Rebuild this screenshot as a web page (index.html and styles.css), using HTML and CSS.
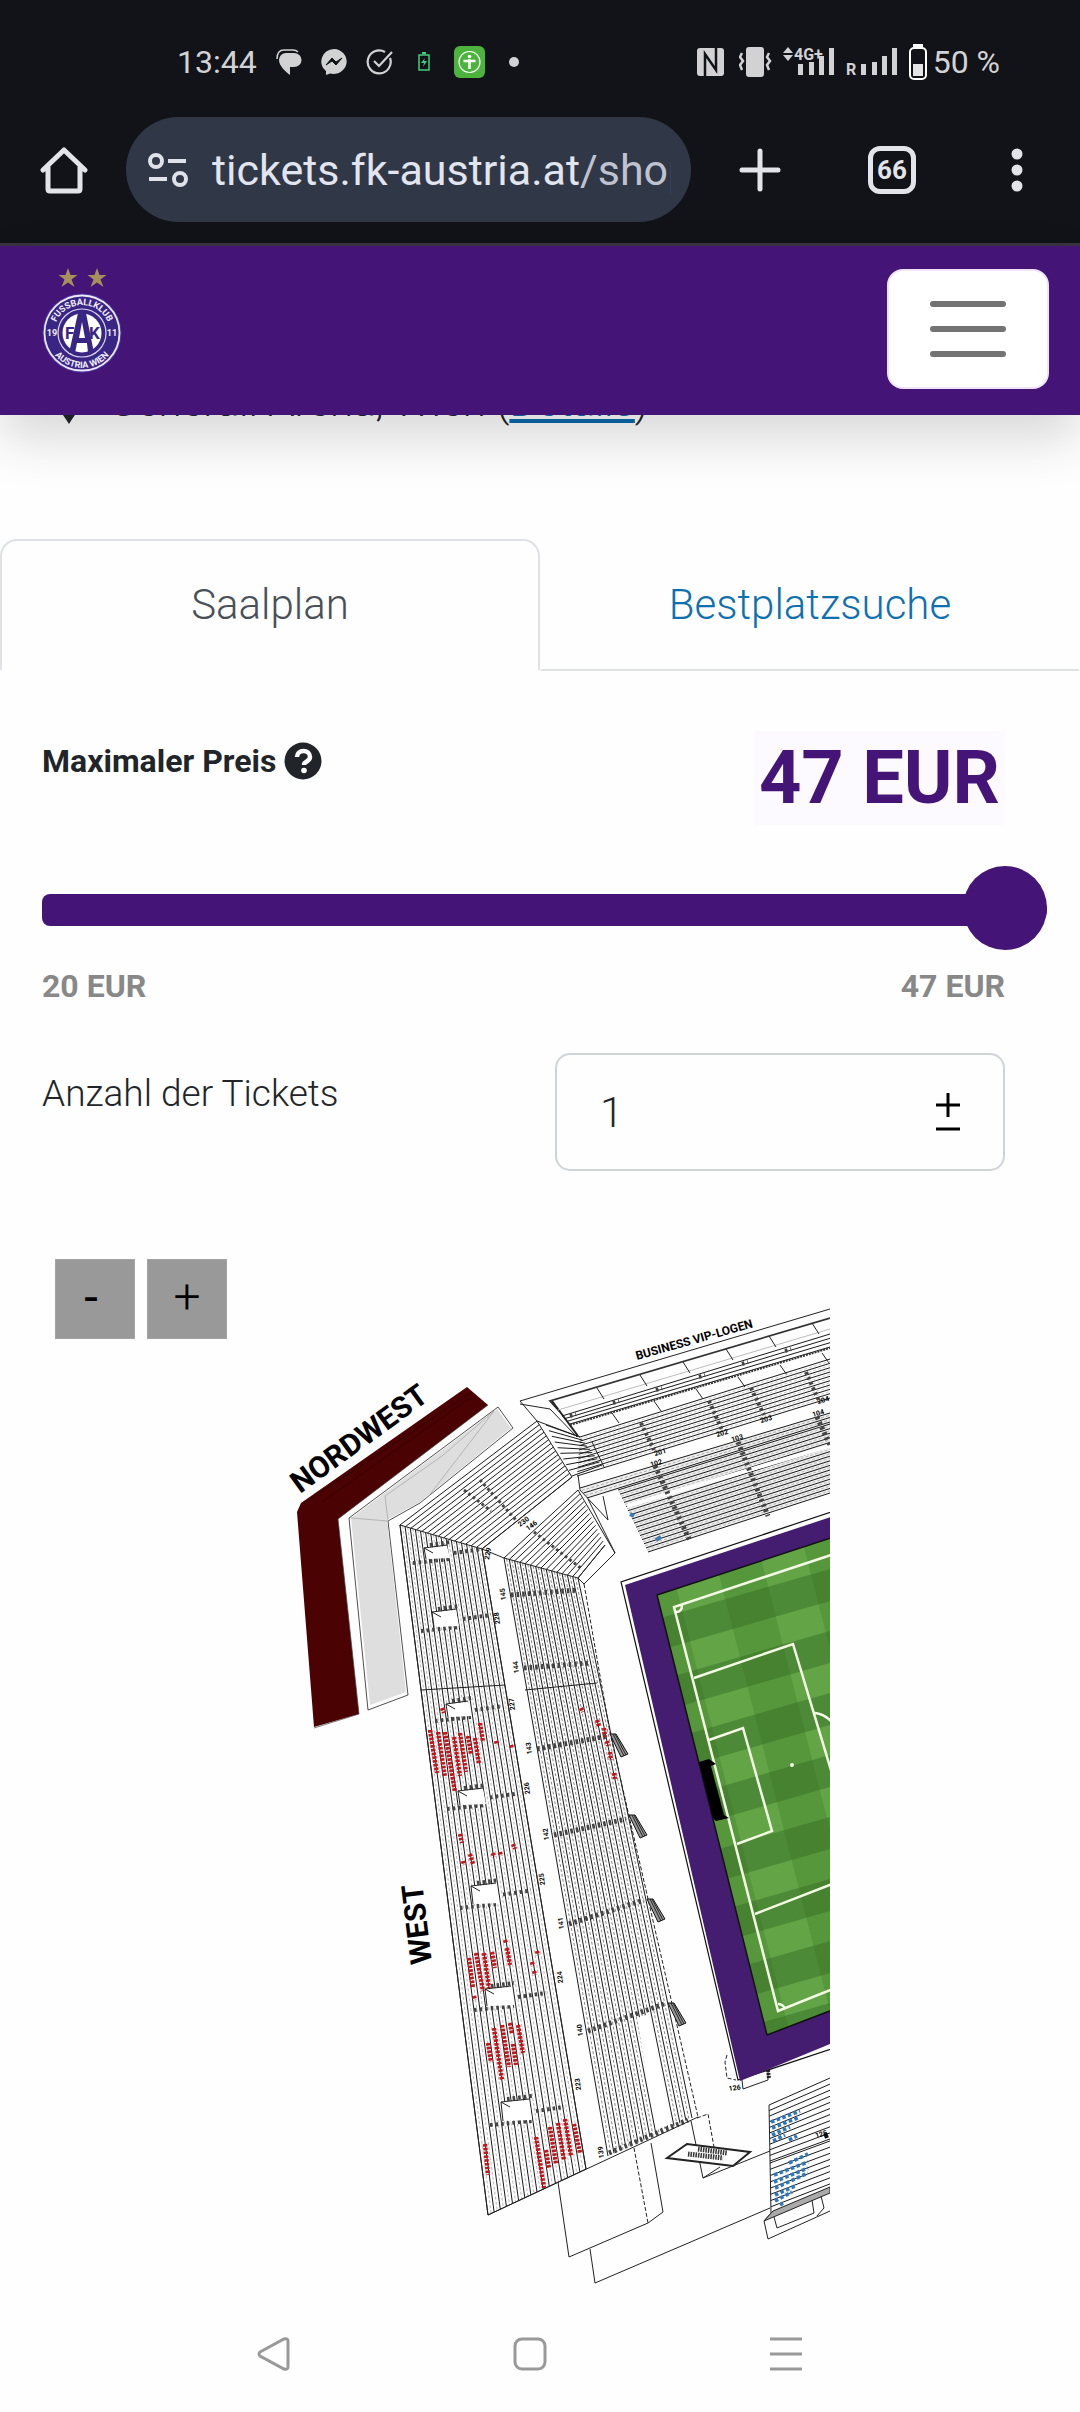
FILE: index.html
```html
<!DOCTYPE html>
<html lang="de">
<head>
    <meta charset="UTF-8">
    <meta name="viewport" content="width=device-width, initial-scale=1.0">
    <title>FK Austria Wien Tickets</title>
    <link rel="stylesheet" href="styles.css">
</head>
<body>
    <div class="phone-top">
        <div class="status">
            <div class="status-left">
                <span>13:44</span>
                <svg width="26" height="26" viewBox="0 0 26 26"><path d="M10 4h8a7 6.500 0 0 1 0 14h-4v8C10 23 3 17 3 11a7 7 0 0 1 7-7z" fill="#d2d2d4"/><path d="M1 10C1 4 4 1 8 1h9c3 0 4 1 5 2" fill="none" stroke="#d2d2d4" stroke-width="1.500"/></svg>
                <svg width="26" height="26" viewBox="0 0 26 26"><path d="M13 0a13 12.500 0 1 1-4 24.500l-4 1.500v-4A13 12.500 0 0 1 13 0z" fill="#d2d2d4"/><path d="M5 16l6-7 4 4 6-4-6 7-4-4z" fill="#121318" stroke="#121318" stroke-width="1"/></svg>
                <svg width="28" height="26" viewBox="0 0 28 26"><g fill="none" stroke="#d2d2d4" stroke-width="2.200"><path d="M19 3A11.500 11.500 0 1 0 24 9"/><path d="M8 12l5 5L26 3"/></g></svg>
                <svg class="mini-battery" width="12" height="20" viewBox="0 0 12 20"><path d="M4 0h4v2H4z" fill="#3fd07a"/><path d="M1 3h10v15H1z" fill="none" stroke="#3fd07a" stroke-width="1.500"/><path d="M7 6l-4 5h3l-1 4 4-6H6z" fill="#3fd07a"/></svg>
                <svg width="31" height="32" viewBox="0 0 31 32"><rect width="31" height="32" rx="6" fill="#4cb43c"/><circle cx="15.500" cy="16" r="10.500" fill="none" stroke="#fff" stroke-width="1.200"/><circle cx="15.500" cy="10.500" r="1.800" fill="#fff"/><path d="M9.500 15h12M15.500 13v10" stroke="#fff" stroke-width="2.600"/></svg>
                <svg class="more-dot" width="10" height="10" viewBox="0 0 10 10"><circle cx="5" cy="5" r="5" fill="#d2d2d4"/></svg>
            </div>
            <div class="status-right">
                <svg width="27" height="28" viewBox="0 0 27 28"><rect width="27" height="28" rx="3" fill="#d2d2d4"/><path d="M8 28V6l11 16V0" fill="none" stroke="#121318" stroke-width="2.500"/></svg>
                <svg class="vibrate" width="33" height="32" viewBox="0 0 33 32"><rect x="7" y="1" width="18" height="30" rx="3" fill="#d2d2d4"/><path d="M3 7l-2 4 3 4-3 4 2 5M30 7l-2 4 3 4-3 4 2 5" fill="none" stroke="#d2d2d4" stroke-width="2.500"/></svg>
                <svg class="signal" width="54" height="32" viewBox="0 0 54 32"><g fill="#d2d2d4"><path d="M0 7l5-6 5 6zM0 9l5 6 5-6z"/><rect x="15" y="18" width="5" height="11"/><rect x="26" y="16" width="5" height="13"/><rect x="36" y="10" width="5" height="19"/><rect x="46" y="2" width="5" height="27"/><text x="11" y="14" class="net">4G+</text></g></svg>
                <svg class="signal" width="54" height="32" viewBox="0 0 54 32"><g fill="#d2d2d4"><text x="0" y="29" class="net">R</text><rect x="15" y="18" width="5" height="11"/><rect x="26" y="16" width="5" height="13"/><rect x="36" y="10" width="5" height="19"/><rect x="46" y="2" width="5" height="27"/></g></svg>
                <svg class="battery" width="18" height="36" viewBox="0 0 18 36"><rect x="4" y="0" width="10" height="3" fill="#fff"/><rect x="1" y="4" width="16" height="31" rx="4" fill="none" stroke="#fff" stroke-width="2"/><rect x="4" y="20" width="10" height="12" fill="#e4e4e4"/></svg>
                <span>50 %</span>
            </div>
        </div>
        <div class="toolbar">
            <button class="tool" aria-label="Startseite"><svg width="48" height="48" viewBox="0 0 48 48"><path d="M3 24L24 4l21 20M8 21v22q0 2 2 2h28q2 0 2-2V21" fill="none" stroke="#e3e3ea" stroke-width="5" stroke-linejoin="round" stroke-linecap="round"/></svg></button>
            <div class="address">
                <svg width="40" height="34" viewBox="0 0 40 34"><g fill="none" stroke="#e0e2ea" stroke-width="4"><circle cx="8" cy="8" r="6"/><path d="M20 8h18M1 26h18"/><circle cx="32" cy="26" r="6"/></g></svg>
                <div class="url">tickets.fk-austria.at<span>/shop</span></div>
            </div>
            <button class="tool" aria-label="Neuer Tab"><svg width="42" height="44" viewBox="0 0 42 44"><path d="M21 3v38M3 22h36" stroke="#e3e3ea" stroke-width="5" stroke-linecap="round"/></svg></button>
            <button class="tool tabs-count">66</button>
            <button class="tool" aria-label="Menü"><svg width="12" height="44" viewBox="0 0 12 44"><g fill="#e3e3ea"><circle cx="6" cy="6" r="5.500"/><circle cx="6" cy="22" r="5.500"/><circle cx="6" cy="38" r="5.500"/></g></svg></button>
        </div>
    </div>

    <header class="header">
        <a href="#" class="logo" aria-label="FK Austria Wien">
            <svg width="82" height="110" viewBox="0 0 82 110">
                <g fill="#a98f5c"><path id="star" d="M27 0l2.500 7h7l-6 4.500 3 7.500-6.500-4.500-6.500 4.500 3-7.500-6-4.500h7z"/><use href="#star" x="29"/></g>
                <circle cx="41" cy="65" r="39.500" fill="#4a3aa5"/>
                <circle cx="41" cy="65" r="37.500" fill="#392584" stroke="#eee8fa" stroke-width="1.800"/>
                <circle cx="41" cy="65" r="24" fill="none" stroke="#ddd5f2" stroke-width="1.200"/>
                <circle cx="41" cy="65" r="19.500" fill="#fff"/>
                <path d="M37 45h8l8 40h-6l-1-10H36l-2 10h-6z" fill="#392584"/>
                <path d="M41 54l3 16h-6z" fill="#fff"/>
                <path id="arc-top" d="M13 65a28 28 0 0 1 56 0" fill="none"/>
                <path id="arc-bottom" d="M6 65a35 35 0 0 0 70 0" fill="none"/>
                <g class="crest-text" fill="#f3effc">
                    <text><textPath href="#arc-top" startOffset="50%">FUSSBALLKLUB</textPath></text>
                    <text><textPath href="#arc-bottom" startOffset="50%">AUSTRIA WIEN</textPath></text>
                    <text x="11" y="68">19</text><text x="71" y="68">11</text>
                </g>
                <g class="crest-fk" fill="#392584"><text x="24" y="71">F</text><text x="48" y="71">K</text></g>
            </svg>
        </a>
        <button class="burger" aria-label="Navigation"><i></i><i></i><i></i></button>
    </header>

    <main>
        <p class="venue">
            <svg width="34" height="44" viewBox="0 0 34 44"><path d="M17 44C8 30 2 24 2 15a15 15 0 0 1 30 0c0 9-6 15-15 29z" fill="#212529"/></svg>
            <span>Generali Arena, Wien (<a href="#">Details</a>)</span>
        </p>

        <nav class="tabs">
            <a href="#" class="tab active">Saalplan</a>
            <a href="#" class="tab">Bestplatzsuche</a>
        </nav>

        <form class="filter">
            <div class="price-head">
                <label for="price">Maximaler Preis
                    <svg width="38" height="38" viewBox="0 0 38 38"><circle cx="19" cy="19" r="18.500" fill="#212529"/><path d="M13 15c0-8 13-8 13 0 0 5-6 4-6 8" fill="none" stroke="#fff" stroke-width="4.500"/><circle cx="20" cy="28.500" r="2.800" fill="#fff"/></svg>
                </label>
                <output class="price-value" id="price-value" for="price">47 EUR</output>
            </div>
            <input class="slider" id="price" type="range" min="20" max="47" value="47">
            <div class="price-range"><span>20 EUR</span><span>47 EUR</span></div>
            <div class="amount">
                <label for="amount">Anzahl der Tickets</label>
                <div class="amount-box">
                    <input id="amount" type="number" min="1" value="1">
                    <svg width="24" height="38" viewBox="0 0 24 38"><path d="M12 0v24M0 12h24M0 36h24" stroke="#000" stroke-width="3"/></svg>
                </div>
            </div>
        </form>

        <section class="plan">
            <div class="zoom">
                <button class="zoom-out">-</button>
                <button class="zoom-in">+</button>
            </div>
            <svg id="map" class="map" viewBox="250 1300 580 1000"></svg>
        </section>
    </main>

    <div class="phone-nav">
        <svg width="34" height="34" viewBox="0 0 34 34"><path d="M3 15L27 2q4-1 4 2v26q0 3-4 2L3 19q-2-2 0-4z"/></svg>
        <svg width="34" height="34" viewBox="0 0 34 34"><rect x="2" y="2" width="30" height="30" rx="7"/></svg>
        <svg width="34" height="34" viewBox="0 0 34 34"><path d="M1 2h32M1 17h32M1 32h32"/></svg>
    </div>
    <script src="plan.js"></script>
</body>
</html>
```

FILE: styles.css
```css
body{
    margin:0;
    background-color:#fefefe;
    color:#212529;
    font-family:Roboto, "Liberation Sans", sans-serif;
}
button{
    border:none;
    padding:0;
    background:none;
    font-family:inherit;
    cursor:pointer;
}
.phone-top{
    background-color:#121318;
    border-bottom:3px solid #38333f;
    height:243px;
}
.status{
    display:flex;
    justify-content:space-between;
    align-items:center;
    height:80px;
    padding:44px 80px 0 177px;
    box-sizing:border-box;
    color:#d2d2d4;
    font-size:32px;
}
.status-left, .status-right{
    display:flex;
    align-items:center;
}
.status-left{
    gap:19px;
}
.status-left .mini-battery{
    margin:0 5px;
}
.status-left .more-dot{
    margin-left:5px;
}
.status-right{
    gap:9px;
}
.status-right .vibrate{
    margin:0 2px 0 6px;
}
.signal{
    overflow:visible;
}
.net{
    font-size:16px;
    font-weight:bold;
}
.status-right span{
    margin-left:-3px;
}
.toolbar{
    display:flex;
    align-items:center;
    margin-top:37px;
    padding:0 57px 0 40px;
}
.tool{
    display:flex;
    align-items:center;
    justify-content:center;
    color:#e3e3ea;
}
.address{
    display:flex;
    align-items:center;
    flex:1;
    min-width:0;
    height:105px;
    margin:0 48px 0 38px;
    padding:0 20px 0 22px;
    box-sizing:border-box;
    border-radius:53px;
    background-color:#303746;
}
.address svg{
    flex:none;
}
.url{
    flex:1;
    min-width:0;
    margin-left:24px;
    overflow:hidden;
    white-space:nowrap;
    color:#e3e5ee;
    font-size:43px;
    line-height:60px;
}
.url span{
    color:#bfc3d0;
}
.tabs-count{
    width:48px;
    height:48px;
    margin:0 95px 0 87px;
    border:5px solid #e3e3ea;
    border-radius:12px;
    box-sizing:border-box;
    font-size:26px;
    font-weight:bold;
}
.header{
    position:relative;
    z-index:1;
    display:flex;
    justify-content:space-between;
    align-items:center;
    height:166px;
    padding:0 31px 3px 41px;
    background-color:#441476;
    box-shadow:0 24px 48px rgba(0,0,0,.15);
}
.logo{
    margin-bottom:12px;
}
.logo svg{
    display:block;
}
.crest-text{
    font-size:9px;
    font-weight:bold;
    text-anchor:middle;
}
.crest-fk{
    font-size:17px;
    font-weight:bold;
}
.burger{
    display:flex;
    flex-direction:column;
    align-items:center;
    justify-content:center;
    gap:19px;
    width:162px;
    height:120px;
    border:2px solid #f0e2fb;
    border-radius:16px;
    background-color:#fff;
}
.burger i{
    width:76px;
    height:6px;
    border-radius:3px;
    background-color:#737373;
}
.venue{
    display:flex;
    align-items:center;
    gap:22px;
    margin:-43px 0 0;
    padding-left:52px;
    font-size:42px;
    font-weight:300;
    line-height:60px;
}
.venue a{
    color:#0b6aad;
    text-decoration-thickness:4px;
    text-underline-offset:3px;
}
.tabs{
    display:flex;
    margin-top:107px;
}
.tab{
    flex:1 0 50%;
    box-sizing:border-box;
    border:2px solid transparent;
    border-bottom-color:#dee2e6;
    color:#0f70b0;
    font-size:42px;
    font-weight:300;
    line-height:128px;
    text-align:center;
    text-decoration:none;
}
.tab.active{
    border-color:#dee2e6;
    border-bottom-color:transparent;
    border-radius:17px 17px 0 0;
    color:#495057;
}
.filter{
    padding:60px 75px 0 42px;
}
.price-head{
    display:flex;
    justify-content:space-between;
    align-items:flex-start;
    font-weight:bold;
}
.price-head label{
    display:flex;
    align-items:center;
    gap:8px;
    margin-top:11px;
    font-size:32px;
}
.price-value{
    padding:0 5px;
    background-color:#fdfaff;
    color:#441476;
    font-size:74px;
    line-height:94px;
}
.slider{
    display:block;
    width:calc(100% + 42px);
    height:84px;
    margin:43px 0 0;
    appearance:none;
    background:none;
}
.slider::-webkit-slider-runnable-track{
    height:32px;
    border-radius:8px 16px 16px 8px;
    background-color:#441476;
}
.slider::-webkit-slider-thumb{
    appearance:none;
    width:84px;
    height:84px;
    margin-top:-28px;
    border-radius:50%;
    background-color:#441476;
}
.price-range{
    display:flex;
    justify-content:space-between;
    margin-top:16px;
    color:#888;
    font-size:32px;
    font-weight:bold;
    line-height:36px;
}
.amount{
    display:flex;
    justify-content:space-between;
    align-items:flex-start;
    margin-top:49px;
    font-weight:300;
}
.amount label{
    margin-top:18px;
    font-size:37px;
    line-height:46px;
}
.amount-box{
    display:flex;
    align-items:center;
    width:450px;
    height:118px;
    padding:0 43px;
    box-sizing:border-box;
    border:2px solid #ced4da;
    border-radius:15px;
}
.amount-box input{
    flex:1;
    min-width:0;
    padding:0;
    border:none;
    background:none;
    color:#212529;
    font-family:inherit;
    font-size:42px;
    font-weight:300;
    appearance:textfield;
}
.amount-box input::-webkit-inner-spin-button{
    appearance:none;
}
.plan{
    position:relative;
    margin-top:129px;
    padding:0 250px;
}
.zoom{
    position:absolute;
    left:55px;
    top:-41px;
    display:flex;
    gap:12px;
}
.zoom button{
    width:80px;
    height:80px;
    border:1px solid #a3a3a3;
    background-color:#999;
    color:#000;
    font-size:48px;
    line-height:72px;
}
.zoom .zoom-out{
    padding:0 8px 12px 0;
    font-family:"Liberation Sans", sans-serif;
}
.zoom .zoom-in{
    padding-bottom:4px;
    font-weight:300;
}
.map{
    display:block;
    width:100%;
    overflow:hidden;
}
.map-title{
    font-weight:bold;
}
.map-no{
    font-size:7px;
    font-weight:bold;
}
.phone-nav{
    display:flex;
    justify-content:space-between;
    align-items:center;
    padding:37px 277px 40px 257px;
}
.phone-nav svg{
    fill:none;
    stroke:#999;
    stroke-width:3px;
}
```

FILE: plan.js
```js
const map = document.getElementById('map');
let out = '';

function line(x1, y1, x2, y2, attr) {
    out += `<path d="M${x1} ${y1}L${x2} ${y2}" ${attr || ''}/>`;
}
function poly(points, attr) {
    out += `<polygon points="${points}" ${attr || ''}/>`;
}
function open(points, attr) {
    out += `<polyline points="${points}" fill="none" ${attr || ''}/>`;
}
function mix(a, b, t) {
    return (a + (b - a) * t).toFixed(1);
}
// rows of seats between the edge a-b and the edge d-c
function rows(a, b, c, d, count, seats) {
    for (let i = 0; i <= count; i++) {
        const t = i / count;
        const x1 = mix(a[0], d[0], t), y1 = mix(a[1], d[1], t);
        const x2 = mix(b[0], c[0], t), y2 = mix(b[1], c[1], t);
        line(x1, y1, x2, y2, 'stroke="#1a1a1a" stroke-width="1"');
        if (seats && i < count) {
            const s = (i + 0.5) / count;
            line(mix(a[0], d[0], s), mix(a[1], d[1], s), mix(b[0], c[0], s), mix(b[1], c[1], s),
                `stroke="${seats}" stroke-width="1" stroke-dasharray="3 2"`);
        }
    }
}
function steps(x1, y1, x2, y2, w) {
    line(x1, y1, x2, y2, `stroke="#444" stroke-width="${w || 4}" stroke-dasharray="2.600 3"`);
}
function label(x, y, angle, text, size) {
    out += `<text transform="translate(${x} ${y}) rotate(${angle})" class="${size ? 'map-title' : 'map-no'}" ${size ? `font-size="${size}"` : ''}>${text}</text>`;
}
const thin = 'stroke="#222" stroke-width="1"';
const dashed = 'stroke="#222" stroke-width="1" stroke-dasharray="4 2"';

// north-west blocks
poly('467,1387 488,1405 338,1519 359,1714 314,1727 297,1512 301,1503', 'fill="#4b0203"');
line(303, 1504, 472, 1392, 'stroke="#350001"');
line(322, 1502, 470, 1398, 'stroke="#350001"');
open('488,1405 338,1519 359,1714 314,1728', 'stroke="#444" stroke-width=".7"');
poly('498,1407 513,1428 420,1503 388,1521 408,1695 368,1710 349,1518', 'fill="#fff" stroke="#222" stroke-width=".8"');
poly('497,1409 511,1428 420,1502 387,1520 406,1692 370,1705 351,1518', 'fill="#dedede"');
open('351,1518 388,1521 385,1496 442,1456 494,1411 428,1497', 'stroke="#aaa" stroke-width=".8"');
label(300, 1494, -36, 'NORDWEST', 30);
label(432, 1963, -97, 'WEST', 30);
label(637, 1360, -15.700, 'BUSINESS VIP-LOGEN', 12);

// west stand, outer ring
rows([400, 1525], [537, 1421], [572, 1477], [482, 1549], 15);
rows([400, 1525], [488, 2215], [586, 2169], [482, 1549], 16, '#bbb');
poly('400,1525 482,1549 586,2169 488,2215', `fill="none" ${thin}`);
open('537,1421 572,1477 482,1549 504,1558', thin);
line(421, 1690, 505, 1685, thin);
steps(464, 1490, 491, 1511, 3);
steps(480, 1480, 516, 1520, 3);
[[424, 1548, 26, 10], [432, 1612, 27, 14], [446, 1704, 25, 12], [458, 1791, 28, 13], [471, 1886, 28, 17], [485, 1989, 29, 16], [501, 2102, 31, 18]].forEach(function (b) {
    const x = b[0], y = b[1], w = b[2], h = b[3];
    steps(x + 6, y - 3, x + w, y - 6);
    steps(x - 11, y + h + 5, x + w, y + h + 1);
    steps(x + w + 4, y + h / 2, x + w + 32, y + h / 2 - 4);
    poly(`${x},${y} ${x + w - 3},${y - 2} ${x + w},${y + h} ${x + 2},${y + h + 1}`, 'fill="#fff"');
    open(`${x + w - 3},${y - 3} ${x},${y} ${x + 2},${y + h + 1}`, thin);
    line(x, y, x + 9, y + 5, thin);
});
label(489, 1560, -80, '229');
label(500, 1624, -97, '228');
label(515, 1710, -97, '227');
label(530, 1794, -97, '226');
label(545, 1885, -97, '225');
label(563, 1983, -97, '224');
label(581, 2090, -97, '223');
label(520, 1527, -36, '230');

// west stand, inner ring
rows([504, 1558], [578, 1490], [605, 1545], [578, 1578], 14);
rows([504, 1558], [608, 2156], [692, 2118], [578, 1578], 14, '#888');
poly('637,2018 649,2014 671,2124 656,2130', 'fill="#fff"');
open('504,1558 578,1578 584,1584 615,1553 578,1490', thin);
line(605, 1545, 578, 1578, thin);
open('584,1584 610,1733 698,2117', dashed);
line(525, 1690, 597, 1683, thin);
[[511, 1595, 578, 1590, 145], [524, 1668, 590, 1663, 144], [537, 1749, 608, 1736, 143], [554, 1835, 626, 1819, 142], [569, 1924, 644, 1900, 141], [588, 2031, 664, 2004, 140], [609, 2153, 688, 2120, 139]].forEach(function (s) {
    steps(s[0], s[1], s[2], s[3], 5);
    label(s[0] - 5, s[1] + 5, -97, s[4]);
});
steps(534, 1532, 582, 1569, 3);
label(528, 1531, -36, '146');
[[610, 1734], [629, 1815], [647, 1899], [668, 2003]].forEach(function (g) {
    const x = g[0], y = g[1];
    poly(`${x},${y} ${x + 6},${y} ${x + 18},${y + 20} ${x + 11},${y + 23}`, 'fill="#999" stroke="#111"');
    line(x + 3, y, x + 14, y + 22, thin);
    line(x + 5, y, x + 16, y + 21, thin);
});

// north stand
open('830,1309 520,1401 537,1421 580,1437', thin);
open('520,1404 550,1409 577,1437', thin);
open('830,1318 550,1401 560,1412', 'stroke="#333" stroke-width="1.800"');
line(552, 1401, 578, 1436, 'stroke="#222" stroke-width="2"');
line(558, 1410, 830, 1329, 'stroke="#bbb"');
rows([562, 1416], [830, 1334], [830, 1347], [570, 1424], 3);
line(570, 1425, 830, 1348, 'stroke="#333" stroke-width="2" stroke-dasharray="2 1"');
for (let i = 0; i < 6; i++) {
    line(597 + i * 43, 1388 - i * 13, 604 + i * 43, 1399 - i * 13, thin);
    line(612 + i * 42, 1413 - i * 12, 619 + i * 42, 1423 - i * 12, thin);
    steps(570 + i * 43, 1416 - i * 13, 576 + i * 43, 1414 - i * 13, 4);
}
rows([580, 1437], [830, 1359], [830, 1398], [577, 1476], 9, '#ccc');
rows([546, 1425], [580, 1437], [602, 1465], [572, 1476], 9);
line(592, 1442, 604, 1467, thin);
steps(641, 1423, 654, 1450, 4);
steps(709, 1401, 722, 1430, 4);
steps(751, 1388, 764, 1415, 4);
steps(806, 1372, 818, 1399, 4);
label(655, 1456, -16, '201');
label(717, 1437, -16, '202');
label(761, 1423, -16, '203');
label(818, 1404, -16, '204');
poly('580,1488 830,1413 830,1493 648,1552 618,1490 587,1498', 'fill="#eee"');
rows([580, 1488], [830, 1413], [830, 1422], [587, 1498], 2, '#aaa');
rows([618, 1490], [830, 1424], [830, 1493], [648, 1552], 15, '#bbb');
line(627, 1506, 830, 1446, 'stroke="#fff" stroke-width="4"');
open('578,1475 580,1490 608,1520 603,1496', thin);
line(588, 1499, 615, 1553, thin);
steps(655, 1466, 690, 1541, 5);
steps(738, 1442, 768, 1516, 5);
steps(817, 1417, 830, 1445, 5);
label(651, 1467, -16, '102');
label(732, 1442, -16, '103');
label(813, 1417, -16, '104');
line(630, 1514, 634, 1516, 'stroke="#3b7bb8" stroke-width="4"');
line(656, 1540, 661, 1537, 'stroke="#3b7bb8" stroke-width="4"');

// pitch
poly('840,1509 621,1582 738,2080 840,2046', 'fill="#fff" stroke="#111" stroke-width="1.200"');
poly('840,1514 625,1585 740,2081 840,2040', 'fill="#441c70"');
out += '<clipPath id="grass"><polygon points="840,1535 657,1595 767,2035 840,2007"/></clipPath><g clip-path="url(#grass)">';
poly('840,1500 640,1595 767,2050 840,2040', 'fill="#62a446"');
for (let i = 0; i < 8; i++) {
    const y = 1624 + i * 62;
    poly(`640,${y} 840,${y - 58} 840,${y - 26} 640,${y + 32}`, 'fill="#4d8a37"');
}
for (let i = 0; i < 3; i++) {
    const x = 632 + i * 92;
    poly(`${x - 24},1500 ${x + 22},1500 ${x + 162},2050 ${x + 116},2050`, 'fill="#2f6a1c" opacity=".22"');
}
out += '</g>';
open('840,1535 657,1595 767,2035 840,2007', 'stroke="#111" stroke-width="1.500"');
const chalk = 'stroke="#f4fbe4" stroke-width="2.500"';
open('840,1552 674,1607 778,2011 840,1986', chalk);
open('694,1678 793,1644 840,1800', chalk);
open('755,1914 840,1881', chalk);
open('709,1740 743,1728 772,1831 737,1844', chalk);
out += `<path d="M815 1713q9 1 17 9M676 1612q6 0 6-7M778 2004q5 0 7 5" fill="none" ${chalk}/>`;
out += '<circle cx="792" cy="1765" r="2" fill="#f4fbe4"/>';
poly('699,1762 709,1759 716,1764 711,1766 724,1815 729,1818 716,1821 713,1818', 'fill="#000"');

// south-west corner
open('727,2055 725,2062 727,2078 736,2080', dashed);
open('742,2080 743,2089 768,2080 768,2070', thin);
line(768, 2070, 769, 2079, 'stroke="#222" stroke-width="4" stroke-dasharray="2 1"');
label(729, 2091, -8, '126');
line(488, 2215, 698, 2117, thin);
open('558,2182 569,2257 648,2223 663,2212 651,2143', thin);
line(634, 2148, 648, 2223, dashed);
open('590,2249 595,2283 770,2208', thin);
open('691,2121 703,2178 770,2151', thin);
open('697,2118 708,2114 714,2147', dashed);
line(703, 2178, 720, 2167, thin);
poly('667,2158 687,2144 750,2152 733,2166', 'fill="#fff" stroke="#222" stroke-width="2"');
line(688, 2154, 723, 2158, 'stroke="#333" stroke-width="5" stroke-dasharray="1.500 1"');
line(698, 2149, 727, 2153, 'stroke="#333" stroke-width="5" stroke-dasharray="1.500 1"');
rows([769, 2105], [830, 2078], [830, 2139], [770, 2161], 10);
rows([770, 2163], [830, 2141], [830, 2190], [771, 2213], 8);
open('769,2105 771,2213 764,2221 768,2239 830,2211', thin);
poly('764,2221 773,2211 830,2187 830,2193', 'fill="#aaa" stroke="#222"');
open('774,2217 777,2228 814,2213 812,2200', thin);
open('821,2196 824,2208 817,2216', thin);
line(825, 2133, 827, 2138, 'stroke="#111" stroke-width="4"');
label(816, 2138, -16, '125');
[[771, 2122, 800, 2111], [772, 2128, 800, 2117], [772, 2135, 790, 2127], [773, 2141, 785, 2135], [789, 2140, 797, 2136], [789, 2163, 808, 2154], [774, 2175, 808, 2162], [774, 2182, 808, 2168], [775, 2188, 808, 2173], [775, 2195, 795, 2186], [775, 2201, 792, 2192], [780, 2205, 783, 2203]].forEach(function (s) {
    line(s[0], s[1], s[2], s[3], 'stroke="#2f77bd" stroke-width="3.600" stroke-dasharray="3.600 2.400"');
});

// free seats in the west stand
[[430, 1730, 437, 1773], [438, 1732, 445, 1777], [445, 1732, 455, 1792], [454, 1737, 460, 1776], [460, 1733, 466, 1772], [468, 1736, 471, 1754], [475, 1738, 479, 1764], [480, 1723, 483, 1742],
 [442, 1708, 444, 1713], [496, 1741, 497, 1745], [511, 1745, 512, 1748], [460, 1834, 462, 1843], [470, 1854, 473, 1864], [463, 1861, 464, 1865], [493, 1853, 494, 1857], [500, 1852, 501, 1856], [513, 1844, 515, 1849],
 [469, 1958, 473, 1988], [476, 1953, 483, 1991], [484, 1953, 489, 1988], [492, 1952, 495, 1968], [505, 1940, 506, 1943], [507, 1948, 510, 1965], [537, 1951, 538, 1955], [532, 1962, 533, 1966], [534, 1971, 535, 1975], [474, 1996, 475, 2000],
 [488, 2043, 491, 2062], [494, 2028, 502, 2080], [502, 2025, 509, 2067], [510, 2023, 512, 2034], [513, 2044, 516, 2065], [518, 2025, 523, 2053],
 [485, 2144, 488, 2175], [536, 2137, 544, 2188], [546, 2150, 549, 2168], [550, 2127, 556, 2164], [558, 2123, 564, 2160], [565, 2119, 571, 2156], [574, 2124, 580, 2153],
 [581, 1708, 583, 1712], [597, 1720, 599, 1727], [604, 1728, 605, 1737], [607, 1741, 608, 1746], [610, 1752, 611, 1760], [614, 1773, 615, 1779]].forEach(function (s) {
    line(s[0], s[1], s[2], s[3], 'stroke="#c3161c" stroke-width="4.400" stroke-dasharray="2.600 1.200"');
});

map.innerHTML = out;

const price = document.getElementById('price');
price.addEventListener('input', function () {
    document.getElementById('price-value').textContent = price.value + ' EUR';
});
```
